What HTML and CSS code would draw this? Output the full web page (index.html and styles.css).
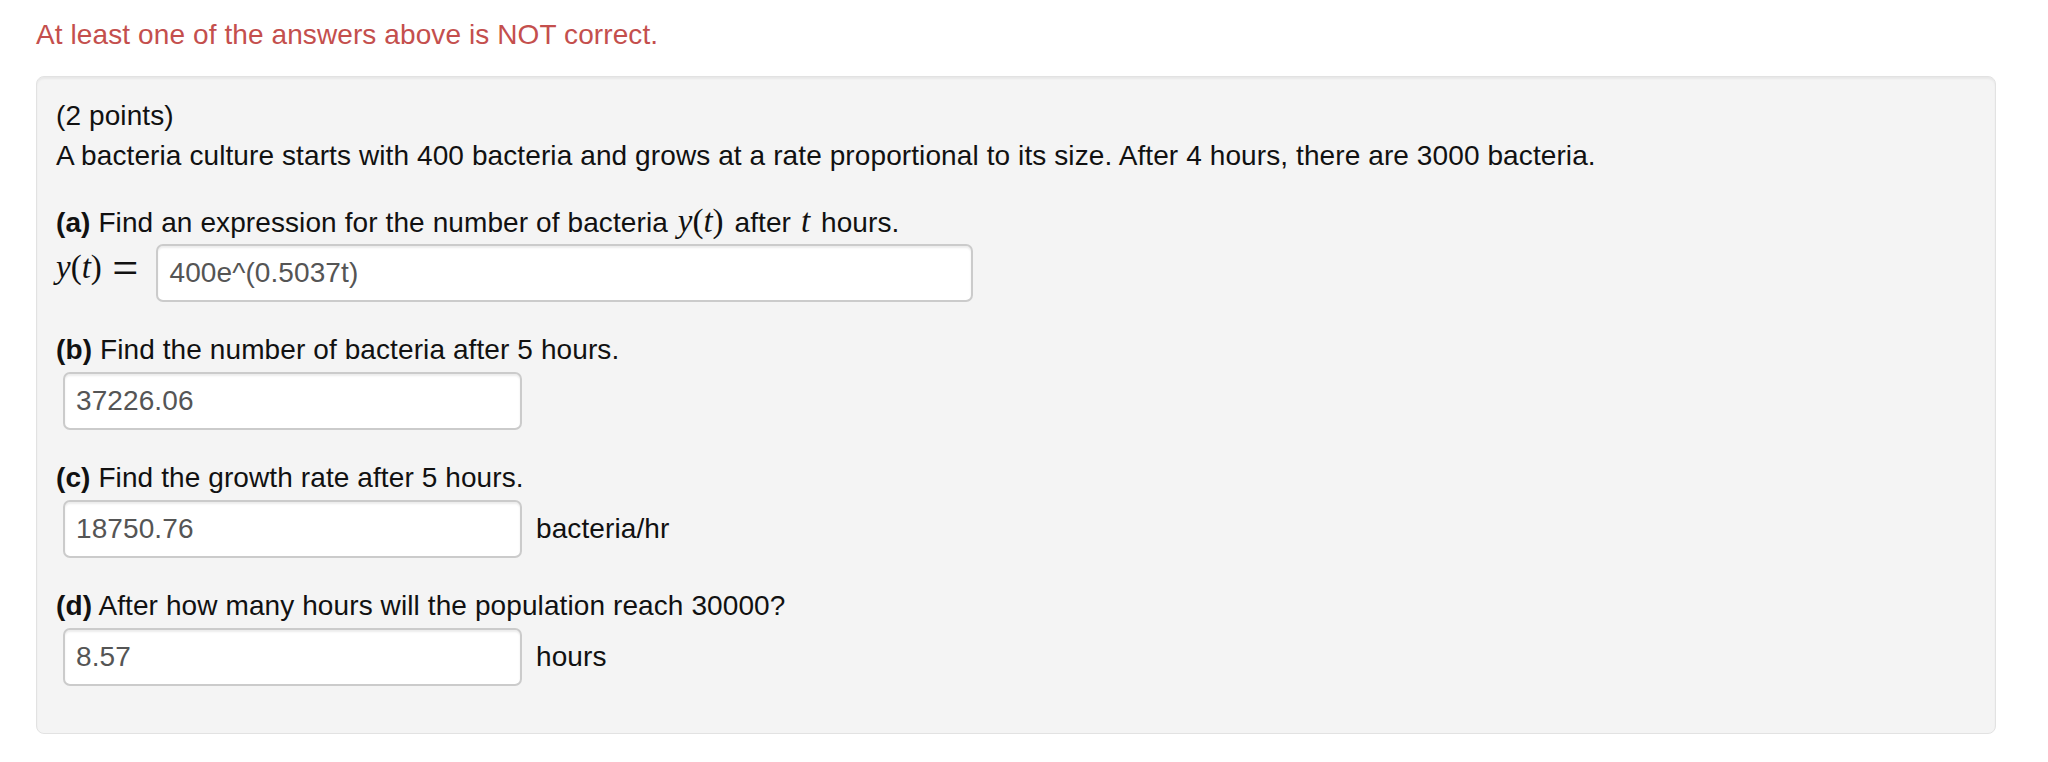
FILE: index.html
```html
<!DOCTYPE html>
<html lang="en">
<head>
<meta charset="utf-8">
<title>Problem</title>
<link rel="stylesheet" href="styles.css">
</head>
<body>
<div class="page">
  <div class="status-msg">At least one of the answers above is NOT correct.</div>
  <div class="well">
    <div class="intro">
      <div class="line">(2 points)</div>
      <div class="line">A bacteria culture starts with 400 bacteria and grows at a rate proportional to its size. After 4 hours, there are 3000 bacteria.</div>
    </div>

    <div class="part">
      <div class="prompt prompt-math"><b>(a)</b> Find an expression for the number of bacteria <span class="math"><i>y</i>(<i>t</i>)</span> after <span class="math"><i>t</i></span> hours.</div>
      <div class="answer-row first">
        <span class="lhs"><span class="math raised"><i>y</i>(<i>t</i>)<span class="eq">=</span></span></span>
        <input class="answer wide" type="text" value="400e^(0.5037t)" readonly>
      </div>
    </div>

    <div class="part">
      <div class="prompt"><b>(b)</b> Find the number of bacteria after 5 hours.</div>
      <div class="answer-row">
        <input class="answer indented" type="text" value="37226.06" readonly>
      </div>
    </div>

    <div class="part">
      <div class="prompt"><b>(c)</b> Find the growth rate after 5 hours.</div>
      <div class="answer-row">
        <input class="answer indented" type="text" value="18750.76" readonly>
        <span class="unit">bacteria/hr</span>
      </div>
    </div>

    <div class="part">
      <div class="prompt"><b>(d)</b> After how many hours will the population reach 30000?</div>
      <div class="answer-row">
        <input class="answer indented" type="text" value="8.57" readonly>
        <span class="unit">hours</span>
      </div>
    </div>
  </div>
</div>
</body>
</html>
```

FILE: styles.css
```css
html, body {
  margin: 0;
  padding: 0;
  background: #ffffff;
}

body {
  font-family: "Liberation Sans", Arial, Helvetica, sans-serif;
  font-size: 28px;
  line-height: 40px;
  color: #111111;
  letter-spacing: 0.1px;
}

.page {
  padding: 15px 52px 0 36px;
}

.status-msg {
  color: #c44f4d;
  margin-bottom: 21px;
}

.well {
  background: #f4f4f4;
  border: 1px solid #e2e2e2;
  border-radius: 8px;
  box-shadow: inset 0 2px 2px rgba(0, 0, 0, 0.05);
  padding: 19px;
}

.intro {
  margin-bottom: 23px;
}

.part {
  margin-bottom: 28px;
}

.prompt b {
  font-weight: bold;
}

.prompt-math {
  padding-top: 4px;
}

.prompt .math {
  margin: 0 3px 0 2px;
}

.math {
  font-family: "Liberation Serif", "Times New Roman", serif;
  font-size: 33px;
  line-height: 1;
  color: #111111;
  letter-spacing: 0;
}

.math i {
  font-style: italic;
}

.answer-row {
  display: flex;
  align-items: baseline;
  margin-top: 2px;
}

.answer-row.first {
  margin-top: 1px;
}

.lhs {
  margin-right: 22px;
}

.raised {
  vertical-align: 4px;
}

.eq {
  display: inline-block;
  margin-left: 14px;
  transform: translateY(1px) scale(1.4, 1.5);
}

.answer {
  box-sizing: border-box;
  width: 459px;
  height: 58px;
  margin: 0;
  padding: 0 11px;
  border: 2px solid #cbcbcb;
  border-radius: 7px;
  background: #ffffff;
  box-shadow: inset 0 2px 2px rgba(0, 0, 0, 0.075);
  font-family: "Liberation Sans", Arial, Helvetica, sans-serif;
  font-size: 28px;
  letter-spacing: 0.1px;
  color: #555555;
  outline: none;
}

.answer.indented {
  margin-left: 7px;
}

.answer.wide {
  width: 817px;
}

.unit {
  margin-left: 14px;
}
```
